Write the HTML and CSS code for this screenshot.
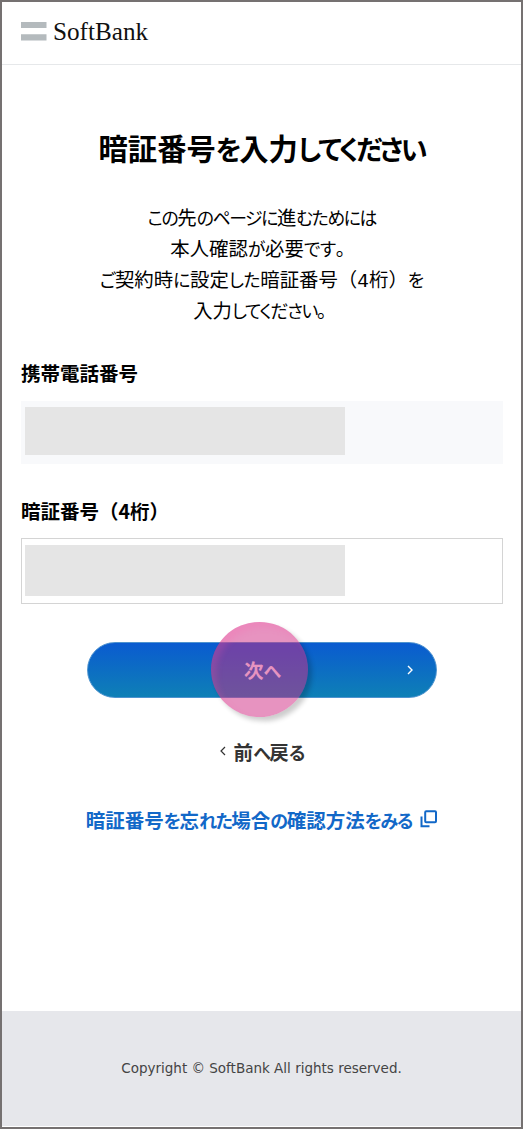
FILE: index.html
```html
<!DOCTYPE html>
<html lang="ja">
<head>
  <meta charset="UTF-8">
  <meta name="viewport" content="width=device-width, initial-scale=1">
  <title>暗証番号の入力 | SoftBank</title>
  <link rel="stylesheet" href="styles.css">
</head>
<body>
  <div class="page">
    <header class="header">
      <svg class="logo-mark" width="26" height="19" viewBox="0 0 26 19">
        <path d="M0 0h25.5v6H0zM0 12.3h25.5v6.2H0z" fill="#b4babd"/>
      </svg>
      <span class="logo-text">SoftBank</span>
    </header>

    <main class="main">
      <h1 class="title">暗証番号<span class="kana">を</span>入力<span class="kana">してください</span></h1>
      <p class="lead">
        <span class="line"><span class="kana">この</span>先<span class="kana">のページに</span>進<span class="kana">むためには</span></span>
        <span class="line line-wide">本人確認<span class="kana">が</span>必要<span class="kana">です</span><span class="full">。</span></span>
        <span class="line"><span class="kana">ご</span>契約時<span class="kana">に</span>設定<span class="kana">した</span>暗証番号<span class="full">（</span><span class="num">4</span>桁<span class="full">）</span><span class="kana">を</span></span>
        <span class="line line-last">入力<span class="kana">してください</span><span class="full">。</span></span>
      </p>

      <div class="field">
        <div class="label">携帯電話番号</div>
        <div class="box box-readonly"><div class="mask"></div></div>
      </div>
      <div class="field field-pin">
        <div class="label">暗証番号<span class="full">（</span>4桁<span class="full">）</span></div>
        <div class="box box-input"><div class="mask"></div></div>
      </div>

      <button class="next" type="button">
        <span class="next-text">次<span class="kana">へ</span></span>
        <svg class="next-arrow" width="8" height="10" viewBox="0 0 8 10">
          <path d="M2 1l4 4-4 4" fill="none" stroke="#fff" stroke-width="1.4"/>
        </svg>
        <span class="tap"></span>
      </button>

      <a class="back">
        <svg width="6" height="10" viewBox="0 0 6 10">
          <path d="M5 1L1 5l4 4" fill="none" stroke="#333" stroke-width="1.2"/>
        </svg>
        <span class="back-text">前<span class="kana">へ</span>戻<span class="kana">る</span></span>
      </a>

      <a class="help">
        <span class="help-text">暗証番号<span class="kana">を</span>忘<span class="kana">れた</span>場合<span class="kana">の</span>確認方法<span class="kana">をみる</span></span>
        <svg width="18" height="18" viewBox="0 0 18 18">
          <rect x="5.2" y="1.2" width="10.8" height="11" rx="1" fill="none" stroke="#1268c8" stroke-width="2"/>
          <path d="M1.5 6.5v9.7h8" fill="none" stroke="#1268c8" stroke-width="2"/>
        </svg>
      </a>
    </main>

    <footer class="footer"><small class="copy">Copyright © SoftBank All rights reserved.</small></footer>
  </div>
</body>
</html>
```

FILE: styles.css
```css
* {
  box-sizing: border-box;
}
body {
  margin: 0;
  background: #fff;
  color: #000;
  font-family: "Noto Sans CJK JP", sans-serif;
  font-feature-settings: "palt";
}
.page {
  display: flex;
  flex-direction: column;
  height: 1129px;
  border: 2px solid #757171;
}
.header {
  display: flex;
  align-items: flex-start;
  height: 63px;
  padding: 20px 0 0 19px;
  border-bottom: 1px solid #e6e8ea;
}
.logo-text {
  margin-left: 6px;
  font-family: "Liberation Serif", serif;
  font-size: 25.2px;
  line-height: 20px;
  color: #111;
}
.main {
  flex: 1;
  display: flex;
  flex-direction: column;
  padding: 0 18.5px 0 19px;
}
/* kana are set smaller and tighter than kanji */
.kana {
  font-size: 0.92em;
  line-height: 1;
  letter-spacing: -1.4px;
}
.full {
  font-feature-settings: "palt" 0;
}
.num {
  font-family: "DejaVu Sans", sans-serif;
  font-size: 0.95em;
  line-height: 1;
}
.title {
  margin: 60px 0 0;
  font-size: 29.3px;
  line-height: 44px;
  font-weight: 700;
  text-align: center;
  white-space: nowrap;
}
.title .kana {
  letter-spacing: -2.4px;
}
.lead {
  margin: 32px 0 0;
  font-size: 19.4px;
  line-height: 31px;
  text-align: center;
  white-space: nowrap;
}
.line {
  display: block;
}
.line-wide {
  padding-left: 2px;
}
.line-wide .kana,
.line:nth-child(3) .kana {
  letter-spacing: -0.3px;
}
.line-last {
  padding-left: 6px;
}
.label {
  height: 44px;
  font-size: 19.5px;
  line-height: 32px;
  font-weight: 700;
}
.field {
  margin-top: 32px;
}
.field-pin {
  margin-top: 31px;
}
.field-pin .label {
  height: 43px;
}
.box {
  height: 63px;
  padding: 6px 4px;
  background: #f8f9fb;
}
.box-input {
  height: 66px;
  padding: 6px 3px;
  background: #fff;
  border: 1px solid #d4d4d4;
}
.mask {
  width: 320px;
  height: 48px;
  background: #e5e5e5;
}
.box-input .mask {
  height: 51px;
}
.next {
  position: relative;
  display: flex;
  align-items: center;
  justify-content: center;
  align-self: center;
  width: 350px;
  height: 56px;
  margin-top: 38px;
  padding: 0;
  border: 1px solid #4e93cf;
  border-radius: 28px;
  background: linear-gradient(#0a5bd0, #0e80b6);
  color: #fff;
  font: inherit;
  font-feature-settings: "palt";
  font-size: 19.5px;
  font-weight: 700;
}
.next-text {
  line-height: 26px;
}
.next-arrow {
  position: absolute;
  right: 22px;
}
/* tap marker over the button */
.tap {
  position: absolute;
  left: 123px;
  top: -21px;
  width: 97px;
  height: 95px;
  border-radius: 50%;
  background: rgba(208, 40, 130, 0.5);
  box-shadow: 4px 4px 5px rgba(0, 0, 0, 0.2), inset 5px 5px 6px rgba(255, 90, 170, 0.2);
}
.back {
  display: flex;
  align-items: center;
  align-self: center;
  gap: 8px;
  height: 30px;
  margin-top: 38px;
  color: #333;
  font-size: 19.5px;
  font-weight: 700;
}
.help {
  display: flex;
  align-items: center;
  align-self: center;
  gap: 8px;
  height: 30px;
  margin-top: 38px;
  color: #1268c8;
  font-size: 19.5px;
  font-weight: 700;
  white-space: nowrap;
}
.footer {
  display: flex;
  align-items: center;
  justify-content: center;
  height: 116px;
  padding-bottom: 2px;
  border-bottom: 1px solid #fff;
  background: #e6e7eb;
}
.copy {
  color: #444;
  font-family: "DejaVu Sans", sans-serif;
  font-size: 13.5px;
}
```
